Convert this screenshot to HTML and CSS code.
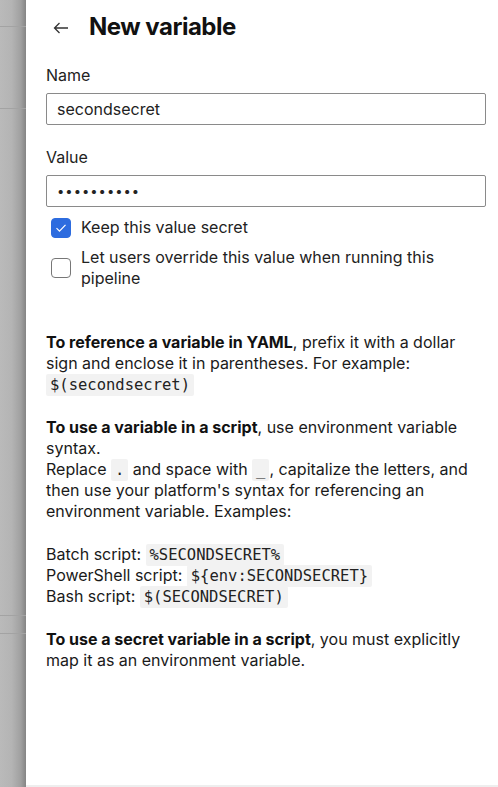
FILE: index.html
```html
<!DOCTYPE html>
<html>
<head>
<meta charset="utf-8">
<link rel="stylesheet" href="styles.css">
</head>
<body>
<div class="page">
  <aside class="backdrop">
    <div class="bline l1"></div>
    <div class="bline l2"></div>
    <div class="bline l3"></div>
    <div class="bline l4"></div>
  </aside>
  <main class="panel">
    <header class="head">
      <svg class="back" width="16" height="12" viewBox="0 0 16 12"><path d="M15 6H1.5M6.5 1L1.5 6l5 5" fill="none" stroke="#333" stroke-width="1.3"/></svg>
      <h1>New variable</h1>
    </header>
    <label class="lbl">Name</label>
    <div class="field">secondsecret</div>
    <label class="lbl second">Value</label>
    <div class="field dots">••••••••••</div>
    <div class="check">
      <span class="box on"><svg width="12" height="10" viewBox="0 0 12 10"><path d="M1.5 5.2l3 3L10.5 1.8" fill="none" stroke="#fff" stroke-width="1.2"/></svg></span>
      <span>Keep this value secret</span>
    </div>
    <div class="check two">
      <span class="box"></span>
      <span>Let users override this value when running this pipeline</span>
    </div>
    <div class="info">
      <p><b>To reference a variable in YAML</b>, prefix it with a dollar sign and enclose it in parentheses. For example:<br><code>$(secondsecret)</code></p>
      <p><b>To use a variable in a script</b>, use environment variable syntax.<br>Replace <code>.</code> and space with <code>_</code>, capitalize the letters, and then use your platform's syntax for referencing an environment variable. Examples:</p>
      <p>Batch script: <code>%SECONDSECRET%</code><br>PowerShell script: <code>${env:SECONDSECRET}</code><br>Bash script: <code>$(SECONDSECRET)</code></p>
      <p><b>To use a secret variable in a script</b>, you must explicitly map it as an environment variable.</p>
    </div>
  </main>
</div>
</body>
</html>
```
FILE: styles.css
```css
html, body { margin: 0; padding: 0; }
body {
  font-family: Inter, "Liberation Sans", Arial, sans-serif;
  color: #1a1a1a;
  background: #fff;
}
.page {
  display: flex;
  width: 498px;
  height: 787px;
  overflow: hidden;
}
.backdrop {
  position: relative;
  width: 26px;
  flex: none;
  background: linear-gradient(to right, #bababa 0%, #b4b4b4 45%, #a0a0a0 80%, #858585 100%);
}
.bline {
  position: absolute;
  left: 0;
  right: 0;
  height: 1px;
  background: #a3a3a3;
}
.l1 { top: 26px; }
.l2 { top: 108px; }
.l3 { top: 615px; }
.l4 { top: 633px; }
.panel {
  flex: 1;
  padding: 0 12px 0 20px;
  border-bottom: 2px solid #eeeeee;
  box-sizing: border-box;
  height: 787px;
}
.head {
  display: flex;
  align-items: center;
  height: 52px;
}
.back { margin-left: 7px; margin-right: 20px; margin-top: 4px; }
h1 {
  margin: 0;
  font-size: 24px;
  font-weight: 700;
  letter-spacing: -0.5px;
  color: #111;
}
.lbl {
  display: block;
  font-size: 16px;
  line-height: 20px;
  margin-top: 13px;
  color: #222;
}
.lbl.second { margin-top: 22px; }
.field {
  margin-top: 8px;
  height: 32px;
  border: 1px solid #8a8a8a;
  border-radius: 2px;
  box-sizing: border-box;
  padding: 0 10px;
  font-size: 16px;
  line-height: 30px;
  color: #222;
}
.dots { letter-spacing: 1px; font-size: 13px; }
.check {
  display: flex;
  align-items: center;
  gap: 10px;
  margin-top: 10px;
  margin-left: 5px;
  font-size: 16px;
  line-height: 21px;
  color: #222;
}
.check.two { margin-top: 9px; }
.box {
  flex: none;
  width: 20px;
  height: 20px;
  box-sizing: border-box;
  border: 1px solid #777;
  border-radius: 4px;
  display: flex;
  align-items: center;
  justify-content: center;
}
.box.on { background: #2d6cdf; border-color: #2d6cdf; }
.info {
  margin-top: 43px;
  font-size: 16px;
  line-height: 21px;
  color: #1a1a1a;
}
.info p { margin: 0 0 22px 0; }
.info b { font-weight: 700; color: #111; }
code {
  font-family: "DejaVu Sans Mono", "Liberation Mono", monospace;
  font-size: 15.5px;
  line-height: 1;
  background: #f2f2f2;
  padding: 2px 4px;
  border-radius: 2px;
  color: #222;
}
```
